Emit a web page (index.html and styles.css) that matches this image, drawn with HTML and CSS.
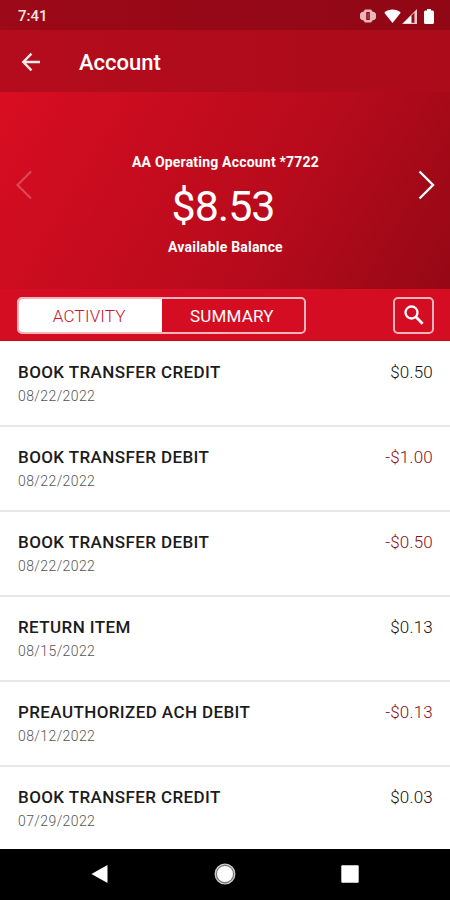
FILE: index.html
```html
<!DOCTYPE html>
<html lang="en">
<head>
    <meta charset="UTF-8">
    <meta name="viewport" content="width=device-width, initial-scale=1.0">
    <title>Account</title>
    <link rel="stylesheet" href="styles.css">
</head>
<body>
    <div class="container">
        <div class="status-bar">
            <div class="status-time">7:41</div>
            <div class="status-icons">
                <svg class="icon-vibrate" width="16" height="14" viewBox="0 0 16 14">
                    <path d="M5 .5h6l2 2.500h1.500L16 5v4l-1.500 2H13l-2 2.500H5L3 11H1.500L0 9V5l1.500-2H3z" fill="#e9b6bc"/>
                    <rect x="6.200" y="3" width="3.600" height="8" fill="#930817"/>
                    <rect x="7.600" y="4" width="1" height="6" fill="#b95560"/>
                </svg>
                <svg class="icon-wifi" width="17" height="14" viewBox="0 0 17 14">
                    <path d="M.3 3.800C4.800-.5 12.200-.5 16.700 3.800L8.500 14z" fill="#fff"/>
                </svg>
                <svg class="icon-signal" width="15" height="15" viewBox="0 0 15 15">
                    <path d="M0 15L15 0v15z" fill="#f0c3c8"/>
                    <path d="M1.500 14.200L9 6.800v7.400z" fill="#fff"/>
                    <path d="M9.600 6.600l2.800-2.800v10H9.600z" fill="#930817"/>
                </svg>
                <svg class="icon-battery" width="10" height="15" viewBox="0 0 10 15">
                    <path d="M3 0h4v1.500h1.500Q10 1.500 10 3v10.500Q10 15 8.500 15h-7Q0 15 0 13.500V3Q0 1.500 1.500 1.500H3z" fill="#fff"/>
                </svg>
            </div>
        </div>

        <header>
            <svg class="back-button" width="20" height="20" viewBox="0 0 20 20">
                <path d="M19 10H3M10.500 1.700L2.300 10l8.200 8.300" fill="none" stroke="#fbe9e9" stroke-width="2.400"/>
            </svg>
            <div class="header-title">Account</div>
        </header>

        <div class="balance-panel">
            <svg class="arrow prev" width="17" height="30" viewBox="0 0 17 30">
                <path d="M16 1.500L2.500 15L16 28.500" fill="none" stroke="#fff" stroke-width="2"/>
            </svg>
            <div class="balance-info">
                <div class="account-name">AA Operating Account *7722</div>
                <div class="balance">$8.53</div>
                <div class="balance-label">Available Balance</div>
            </div>
            <svg class="arrow" width="17" height="30" viewBox="0 0 17 30">
                <path d="M1.500 1.500L15 15L1.500 28.500" fill="none" stroke="#fff" stroke-width="2.400"/>
            </svg>
        </div>

        <div class="toolbar">
            <div class="tabs">
                <div class="tab active">ACTIVITY</div>
                <div class="tab">SUMMARY</div>
            </div>
            <div class="search-button">
                <svg width="20" height="20" viewBox="0 0 20 20">
                    <circle cx="7.500" cy="7.500" r="6" fill="none" stroke="#fff" stroke-width="2.300"/>
                    <path d="M12 12l6.700 6.700" stroke="#fff" stroke-width="2.800"/>
                </svg>
            </div>
        </div>

        <div class="transactions">
            <div class="transaction">
                <div>
                    <div class="name">BOOK TRANSFER CREDIT</div>
                    <div class="date">08/22/2022</div>
                </div>
                <div class="amount">$0.50</div>
            </div>
            <div class="transaction">
                <div>
                    <div class="name">BOOK TRANSFER DEBIT</div>
                    <div class="date">08/22/2022</div>
                </div>
                <div class="amount debit">-$1.00</div>
            </div>
            <div class="transaction">
                <div>
                    <div class="name">BOOK TRANSFER DEBIT</div>
                    <div class="date">08/22/2022</div>
                </div>
                <div class="amount debit">-$0.50</div>
            </div>
            <div class="transaction">
                <div>
                    <div class="name">RETURN ITEM</div>
                    <div class="date">08/15/2022</div>
                </div>
                <div class="amount">$0.13</div>
            </div>
            <div class="transaction">
                <div>
                    <div class="name">PREAUTHORIZED ACH DEBIT</div>
                    <div class="date">08/12/2022</div>
                </div>
                <div class="amount debit">-$0.13</div>
            </div>
            <div class="transaction">
                <div>
                    <div class="name">BOOK TRANSFER CREDIT</div>
                    <div class="date">07/29/2022</div>
                </div>
                <div class="amount">$0.03</div>
            </div>
        </div>

        <div class="nav-bar">
            <svg width="22" height="22" viewBox="0 0 22 22">
                <path d="M18.500 2v18L2.500 11z" fill="#fff"/>
            </svg>
            <svg width="22" height="22" viewBox="0 0 22 22">
                <circle cx="11" cy="11" r="9.800" fill="#777" stroke="#ccc" stroke-width="1.300"/>
                <circle cx="11" cy="11" r="8" fill="#fff"/>
            </svg>
            <svg width="22" height="22" viewBox="0 0 22 22">
                <rect x="2.300" y="2.300" width="17.400" height="17.400" rx="1" fill="#fff"/>
            </svg>
        </div>
    </div>
</body>
</html>
```

FILE: styles.css
```css
* {
    margin: 0;
    padding: 0;
    box-sizing: border-box;
}

body {
    background-color: #fff;
    color: #1c1c1c;
    font-family: Roboto, 'Liberation Sans', sans-serif;
}

.container {
    height: 900px;
    display: flex;
    flex-direction: column;
    overflow: hidden;
}

.status-bar {
    height: 30px;
    padding: 2px 16px 0 18px;
    background: linear-gradient(to right, #9c0918, #900716);
    display: flex;
    align-items: center;
    justify-content: space-between;
}

.status-time {
    font-size: 15px;
    font-weight: 500;
    color: #fbe4e4;
}

.status-icons {
    display: flex;
    align-items: center;
}

.icon-wifi {
    margin-left: 8px;
}

.icon-signal {
    margin-left: 1px;
}

.icon-battery {
    margin-left: 7px;
}

header {
    height: 62px;
    padding: 2px 21px 0;
    background: linear-gradient(to right, #b40c1c, #ac0b19);
    color: #fff;
    display: flex;
    align-items: center;
}

.back-button {
    margin-right: 38px;
}

.header-title {
    font-size: 22px;
    font-weight: 500;
}

.balance-panel {
    height: 197px;
    padding: 0 15px 11px;
    background: linear-gradient(120deg, #d90d22 0%, #c50c1e 35%, #b60b1c 62%, #950815 100%);
    color: #fff;
    display: flex;
    align-items: center;
    justify-content: space-between;
}

.balance-info {
    text-align: center;
    padding: 39px 0 0 1px;
}

.account-name,
.balance-label {
    font-size: 14px;
    line-height: 20px;
    font-weight: 700;
    letter-spacing: 0.2px;
}

.balance {
    font-size: 43px;
    line-height: 50px;
    letter-spacing: -1px;
    margin: 9px 0 6px;
    padding-right: 5px;
}

.prev {
    opacity: 0.25;
}

.toolbar {
    height: 52px;
    padding: 1px 16px 0 17px;
    background-color: #d50d22;
    border-bottom: 1px solid #c20b1b;
    display: flex;
    align-items: center;
    justify-content: space-between;
}

.tabs {
    width: 289px;
    height: 37px;
    border: 2px solid #f6b5b8;
    border-radius: 5px;
    display: flex;
    overflow: hidden;
}

.tab {
    flex: 1;
    padding: 2px 2px 0 0;
    display: flex;
    align-items: center;
    justify-content: center;
    font-size: 17px;
    letter-spacing: 0.2px;
    color: #fff;
}

.tab.active {
    background-color: #fff;
    color: #c8142a;
    font-weight: 300;
}

.search-button {
    width: 41px;
    height: 37px;
    border: 2px solid #f6b5b8;
    border-radius: 5px;
    display: flex;
    align-items: center;
    justify-content: center;
}

.transactions {
    flex: 1;
    padding-top: 1px;
    overflow: hidden;
}

.transaction {
    height: 85px;
    padding: 19px 17px 0 18px;
    border-bottom: 2px solid #e8e8e8;
    display: flex;
    justify-content: space-between;
}

.transaction:last-child {
    border-bottom: none;
}

.name {
    font-size: 17px;
    line-height: 22px;
    font-weight: 500;
    letter-spacing: 0.4px;
}

.date {
    margin-top: 4px;
    font-size: 14px;
    line-height: 18px;
    letter-spacing: 0.4px;
    font-weight: 300;
    color: #555;
}

.amount {
    font-size: 17px;
    line-height: 22px;
    font-weight: 300;
    letter-spacing: 0.2px;
    color: #111;
}

.debit {
    color: #86101e;
}

.nav-bar {
    height: 51px;
    padding-bottom: 1px;
    background-color: #000;
    display: flex;
    align-items: center;
    justify-content: center;
    gap: 103px;
}
```
